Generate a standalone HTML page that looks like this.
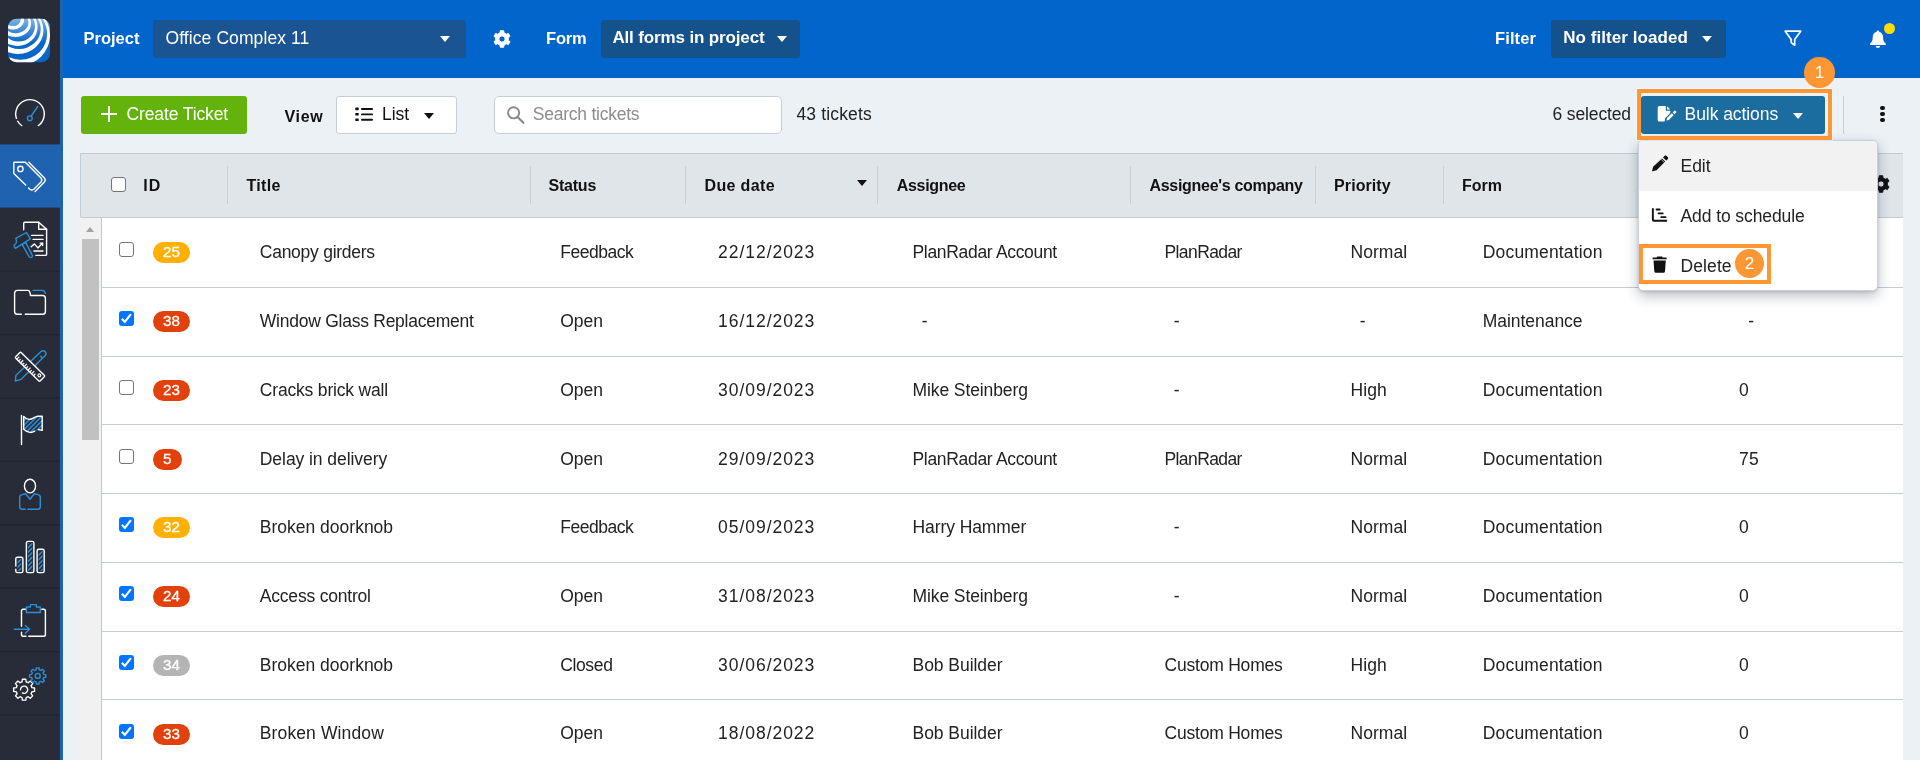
<!DOCTYPE html>
<html lang="en"><head><meta charset="utf-8"><title>Tickets</title>
<style>
*{box-sizing:border-box;margin:0;padding:0}
html,body{width:1920px;height:760px;overflow:hidden;background:#ecf1f6}
body{position:relative;font-family:"Liberation Sans",Arial,sans-serif;font-size:17px;color:#222}
#app{position:absolute;left:0;top:0;width:1920px;height:760px;overflow:hidden;will-change:transform}
.a{position:absolute}
.t{position:absolute;white-space:nowrap;line-height:20px;height:20px}
.sb{position:absolute;left:0;top:0}
.hdr{position:absolute;left:63px;top:0;width:1857px;height:78px;background:#0265cc}
.dd{position:absolute;top:20px;height:38px;border-radius:3px;background:#15528b}
.car{position:absolute;width:0;height:0;border-left:5.8px solid transparent;border-right:5.8px solid transparent;border-top:6.6px solid #fff}
.btn{position:absolute;border-radius:3px}
.box{position:absolute;background:#fff;border:1px solid #c6cfd9;border-radius:4px}
.th{position:absolute;left:80px;top:153px;width:1823px;height:65px;background:#e0e5ea;border:1px solid #bfcbd8;border-right:none;border-radius:2px 0 0 2px}
.vs{position:absolute;top:166px;width:1px;height:38px;background:#c8cfd7}
.rows{position:absolute;left:101px;top:218px;width:1802px;height:543px;background:#fff;border-left:1px solid #bccad9}
.rs{position:absolute;left:101px;width:1802px;height:1px;background:#c1cddb}
.cb{position:absolute;width:15px;height:15px;border-radius:3px;background:#fff;border:1.3px solid #767676}
.cb.on{background:#0075ff;border:none}
.bd{position:absolute;height:21px;border-radius:11px;color:#fff;font-size:15.2px;line-height:19.4px;text-align:center;-webkit-text-stroke:0.3px #fff}
.menu{position:absolute;left:1638px;top:140px;width:240px;height:151px;background:#fff;border:1px solid #c6d1dd;border-radius:5px;box-shadow:0 5px 13px rgba(30,40,55,.30),0 1px 3px rgba(30,40,55,.14);overflow:hidden}
.hl{position:absolute;border:4px solid #fd9733;box-shadow:0 0 0 1px rgba(255,255,255,.45)}
.nb{position:absolute;border-radius:50%;background:#fd9733;color:#fff;text-align:center}
</style></head>
<body>
<div id="app">
<nav>
<svg class="sb" width="63" height="760" viewBox="0 0 63 760">
<defs><linearGradient id="lg" x1="0" y1="0" x2="0" y2="1"><stop offset="0" stop-color="#7db7e8"/><stop offset="0.3" stop-color="#3c88d6"/><stop offset="0.55" stop-color="#0b68c8"/><stop offset="1" stop-color="#0765c6"/></linearGradient><clipPath id="lc"><rect x="8" y="18.8" width="42" height="43.4" rx="8.5" ry="8.5"/></clipPath><pattern id="hz" width="3.2" height="3.2" patternUnits="userSpaceOnUse" patternTransform="rotate(-45)"><rect width="3.2" height="1.5" fill="#2b8fd6"/></pattern><clipPath id="fc"><path d="M23.7 416.6 C26 419 28 419.6 30 419.3 C33.5 418.8 35 416.2 37.9 416.2 L42.2 416.2 L42.2 430.4 L38.3 429.6 L34.7 431.2 C32.5 432.4 31 432.6 30 432.4 C27.5 432 25.5 431 23.7 429.2 Z"/></clipPath></defs>
<rect x="0" y="0" width="60" height="760" fill="#272c38"/>
<rect x="60" y="0" width="3" height="760" fill="#1e62b0"/>
<rect x="0" y="144.4" width="60" height="63.2" fill="#1e62b0"/>
<rect x="0" y="270.7" width="60" height="1" fill="#1f2430"/>
<rect x="0" y="334.1" width="60" height="1" fill="#1f2430"/>
<rect x="0" y="397.5" width="60" height="1" fill="#1f2430"/>
<rect x="0" y="460.9" width="60" height="1" fill="#1f2430"/>
<rect x="0" y="524.3" width="60" height="1" fill="#1f2430"/>
<rect x="0" y="587.7" width="60" height="1" fill="#1f2430"/>
<rect x="0" y="651.1" width="60" height="1" fill="#1f2430"/>
<rect x="0" y="714.5" width="60" height="1" fill="#1f2430"/>
<g clip-path="url(#lc)"><rect x="8" y="18" width="42" height="45" fill="url(#lg)"/>
<path fill="#fff" fill-rule="evenodd" d="M1.70 19.80 A11.20 9.70 0 1 0 24.10 19.80 A11.20 9.70 0 1 0 1.70 19.80 Z M5.10 19.80 A7.80 6.30 0 1 0 20.70 19.80 A7.80 6.30 0 1 0 5.10 19.80 Z"/>
<path fill="#fff" fill-rule="evenodd" d="M-0.68 23.18 A15.90 13.80 0 1 0 31.12 23.18 A15.90 13.80 0 1 0 -0.68 23.18 Z M3.08 22.62 A12.70 10.60 0 1 0 28.48 22.62 A12.70 10.60 0 1 0 3.08 22.62 Z"/>
<path fill="#fff" fill-rule="evenodd" d="M-2.56 26.86 A20.10 19.10 0 1 0 37.64 26.86 A20.10 19.10 0 1 0 -2.56 26.86 Z M1.96 25.94 A16.50 15.50 0 1 0 34.96 25.94 A16.50 15.50 0 1 0 1.96 25.94 Z"/>
<path fill="#fff" fill-rule="evenodd" d="M-7.45 30.20 A25.45 23.85 0 1 0 43.45 30.20 A25.45 23.85 0 1 0 -7.45 30.20 Z M-2.35 29.00 A21.55 19.95 0 1 0 40.75 29.00 A21.55 19.95 0 1 0 -2.35 29.00 Z"/>
<path fill="#fff" fill-rule="evenodd" d="M-11.46 35.21 A30.75 30.35 0 1 0 50.04 35.21 A30.75 30.35 0 1 0 -11.46 35.21 Z M-5.74 33.79 A26.45 26.05 0 1 0 47.16 33.79 A26.45 26.05 0 1 0 -5.74 33.79 Z"/>
</g>
<path d="M22.21 125.99 A14.3 14.3 0 0 1 17.37 120.71" fill="none" stroke="#fff" stroke-width="1.4"/>
<path d="M16.56 118.89 A14.3 14.3 0 1 1 37.79 125.99" fill="none" stroke="#fff" stroke-width="1.4"/>
<circle cx="29.8" cy="118.3" r="2.4" fill="none" stroke="#2b8fd6" stroke-width="1.4"/>
<path d="M31.2 116.2 L37.7 106.5" stroke="#2b8fd6" stroke-width="1.4" stroke-linecap="round"/>
<g fill="none" stroke="#fff" stroke-width="1.4" stroke-linecap="round" stroke-linejoin="round"><path d="M25.7 185.1 L13.8 173.6 L13.8 162.7 Q13.8 162.2 14.3 162.2 L25.3 162.2 L41 178 Q42.6 180 41 182 L33.8 189.2 Q31.8 190.8 29.8 189.2 L28.6 188"/><circle cx="20.4" cy="168.9" r="2.7"/><path d="M28.8 162.2 L44.4 178 Q46 180 44.4 182 L35.1 191.4"/></g>
<g fill="none" stroke="#fff" stroke-width="1.4" stroke-linecap="round" stroke-linejoin="round"><path d="M23.7 229.7 L23.7 223.4 Q23.7 222.2 24.9 222.2 L38.7 222.2 L46.6 229.3 L46.6 254.2 Q46.6 255.4 45.4 255.4 L35.9 255.4"/><path d="M38.7 222.2 L38.7 229.3 L46.6 229.3"/><path d="M31.6 235.4 H43 M33.1 239.4 H43 M33.9 251 H43"/><path d="M31.2 246.7 L34.3 243.9 L37.9 247.9 L42.6 243.1 M40.2 243.1 H42.6 V245.5"/></g>
<g fill="#272c38" stroke="#2b8fd6" stroke-width="1.4" stroke-linejoin="round"><path d="M25.7 242.4 L32.4 255.6 Q32.6 257.4 30.8 257.6 Q29.4 257.6 28.8 256.2 L22.1 244.3 Z"/><path d="M26.4 232.5 L30.4 238.8 L15.4 248.3 L13.8 245.5 Q16.6 243.6 16.6 241.6 L15.8 238.4 Z"/></g>
<g fill="none" stroke-width="1.4" stroke-linecap="round" stroke-linejoin="round"><path stroke="#fff" d="M21.3 314.2 L17.4 314.2 Q14.6 314.2 14.6 311.4 L14.6 293.2 Q14.6 290.4 17.4 290.4 L27.6 290.4 Q29.4 290.4 29.8 292.2 L30.6 295.5 L42.6 295.5 Q45.4 295.5 45.4 298.3 L45.4 311.4 Q45.4 314.2 42.6 314.2 L25.3 314.2"/><path stroke="#2b8fd6" d="M33.1 290.4 L42.4 290.4 Q44.6 290.6 45.4 293.3"/></g>
<g fill="none" stroke="#2b8fd6" stroke-width="1.4" stroke-linecap="round" stroke-linejoin="round"><path d="M15.8 375.5 L41 351.6 Q43.4 349.8 45.2 351.8 Q47 353.8 45 355.8 L20.9 379.4 L15.4 381 Z"/><path d="M40.4 356.2 L42 357.4"/></g>
<g transform="translate(20.5 351.8) rotate(44.5)"><rect x="0" y="0" width="34.5" height="8" rx="1.2" fill="#272c38" stroke="#fff" stroke-width="1.4"/><path d="M2.6 8 V4.2" stroke="#fff" stroke-width="1.2"/><path d="M5.2 8 V5.2" stroke="#fff" stroke-width="1.2"/><path d="M7.8 8 V4.2" stroke="#fff" stroke-width="1.2"/><path d="M10.4 8 V5.2" stroke="#fff" stroke-width="1.2"/><path d="M13.0 8 V4.2" stroke="#fff" stroke-width="1.2"/><path d="M15.6 8 V5.2" stroke="#fff" stroke-width="1.2"/><path d="M18.2 8 V4.2" stroke="#fff" stroke-width="1.2"/><path d="M20.8 8 V5.2" stroke="#fff" stroke-width="1.2"/><path d="M23.4 8 V4.2" stroke="#fff" stroke-width="1.2"/><path d="M26.0 8 V5.2" stroke="#fff" stroke-width="1.2"/><circle cx="30" cy="3.6" r="1.4" fill="none" stroke="#fff" stroke-width="1.2"/></g>
<rect x="23.7" y="416" width="18.5" height="17" fill="url(#hz)" clip-path="url(#fc)"/>
<g fill="none" stroke="#fff" stroke-width="1.4" stroke-linecap="round" stroke-linejoin="round"><path d="M21.5 415.4 V444.6"/><path d="M38.3 429.6 L42.2 430.4 L42.2 416.2 L37.9 416.2 C35 416.2 33.5 418.8 30 419.3 C28 419.6 26 419 23.7 416.6 L23.7 429.2 C25.5 431 27.5 432 30 432.4 C31 432.6 32.5 432.4 34.7 431.2"/></g>
<ellipse cx="30" cy="486.1" rx="5.6" ry="6.8" fill="none" stroke="#fff" stroke-width="1.4"/>
<path fill="none" stroke="#2b8fd6" stroke-width="1.4" stroke-linecap="round" stroke-linejoin="round" d="M28 509.2 L37.9 509.2 Q40.3 509.2 40.3 506.8 L40.3 497.3 Q40.3 495 37.9 494.6 L34.3 493.8 L30 499.3 L25.7 493.8 L22.1 494.6 Q19.7 495 19.7 497.3 L19.7 506.8 Q19.7 509.2 22.1 509.2 L25.3 509.2"/>
<rect x="17.4" y="558.8" width="3.9" height="12.2" fill="url(#hz)"/>
<rect x="28.0" y="543.0" width="4.3" height="28.0" fill="url(#hz)"/>
<rect x="38.7" y="550.9" width="3.9" height="20.1" fill="url(#hz)"/>
<g fill="none" stroke="#fff" stroke-width="1.4" stroke-linecap="round"><path d="M15.8 566 V558.8 Q15.8 557.2 17.4 557.2 H21.3 Q22.9 557.2 22.9 558.8 V571 Q22.9 572.6 21.3 572.6 H17.4 Q15.8 572.6 15.8 571 V569.2"/><rect x="26.4" y="541.4" width="7.5" height="31.2" rx="1.7"/><rect x="37.1" y="549.3" width="7.1" height="23.3" rx="1.7"/></g>
<g fill="none" stroke-width="1.4" stroke-linecap="round" stroke-linejoin="round"><path stroke="#fff" d="M25.7 609.3 H23.3 Q21.5 609.3 21.5 611.1 V626.3 M21.5 632.2 V634.4 Q21.5 636.2 23.3 636.2 H26 M28.8 636.2 H43.6 Q45.4 636.2 45.4 634.4 V611.1 Q45.4 609.3 43.6 609.3 H41.8"/><path stroke="#2b8fd6" d="M26.4 612.5 V607 H30.4 V604.6 H36.3 V607 H40.3 V612.5 Z"/><path stroke="#2b8fd6" d="M14.2 629.3 H29.4 M25.3 625.5 L29.6 629.3 L25.3 633.3"/></g>
<path d="M22.02 681.87 L22.36 679.24 L25.84 679.24 L26.18 681.87 L28.17 682.70 L30.26 681.08 L32.72 683.54 L31.10 685.63 L31.93 687.62 L34.56 687.96 L34.56 691.44 L31.93 691.78 L31.10 693.77 L32.72 695.86 L30.26 698.32 L28.17 696.70 L26.18 697.53 L25.84 700.16 L22.36 700.16 L22.02 697.53 L20.03 696.70 L17.94 698.32 L15.48 695.86 L17.10 693.77 L16.27 691.78 L13.64 691.44 L13.64 687.96 L16.27 687.62 L17.10 685.63 L15.48 683.54 L17.94 681.08 L20.03 682.70 Z" fill="none" stroke="#fff" stroke-width="1.35" stroke-linejoin="round"/>
<path d="M20.50 689.90 A3.6 3.6 0 1 1 22.40 692.90" fill="none" stroke="#fff" stroke-width="1.35" stroke-linecap="round"/>
<path d="M36.11 669.91 L36.35 667.81 L39.05 667.81 L39.29 669.91 L40.81 670.54 L42.47 669.23 L44.37 671.13 L43.06 672.79 L43.69 674.31 L45.79 674.55 L45.79 677.25 L43.69 677.49 L43.06 679.01 L44.37 680.67 L42.47 682.57 L40.81 681.26 L39.29 681.89 L39.05 683.99 L36.35 683.99 L36.11 681.89 L34.59 681.26 L32.93 682.57 L31.03 680.67 L32.34 679.01 L31.71 677.49 L29.61 677.25 L29.61 674.55 L31.71 674.31 L32.34 672.79 L31.03 671.13 L32.93 669.23 L34.59 670.54 Z" fill="none" stroke="#2b8fd6" stroke-width="1.35" stroke-linejoin="round"/>
<circle cx="37.7" cy="675.9" r="2.5" fill="none" stroke="#2b8fd6" stroke-width="1.35"/>
</svg>
</nav>
<header>
<div class="hdr"></div>
<span class="t " style="left:83.6px;top:28px;font-size:16.5px;letter-spacing:-0.02px;color:#fff;font-weight:700;">Project</span>
<div class="dd" style="left:153px;width:313px;background:#1a5492"></div>
<span class="t " style="left:165.5px;top:28px;font-size:17.5px;letter-spacing:0.09px;color:#fff;">Office Complex 11</span>
<div class="car" style="left:439.8px;top:35.8px"></div>
<svg class="a" style="left:491px;top:28px" width="22" height="22" viewBox="-11 -11 22 22"><path fill="#fff" stroke="#fff" stroke-width="0.9" stroke-linejoin="round" fill-rule="evenodd" d="M-2.01 -6.18 L-1.68 -8.33 L1.68 -8.33 L2.01 -6.18 L4.35 -4.83 L6.38 -5.62 L8.06 -2.71 L6.36 -1.35 L6.36 1.35 L8.06 2.71 L6.38 5.62 L4.35 4.83 L2.01 6.18 L1.68 8.33 L-1.68 8.33 L-2.01 6.18 L-4.35 4.83 L-6.38 5.62 L-8.06 2.71 L-6.36 1.35 L-6.36 -1.35 L-8.06 -2.71 L-6.38 -5.62 L-4.35 -4.83 Z M3.1 0 A3.1 3.1 0 1 0 -3.1 0 A3.1 3.1 0 1 0 3.1 0 Z"/></svg>
<span class="t " style="left:546.1px;top:28px;font-size:16.5px;letter-spacing:-0.22px;color:#fff;font-weight:700;">Form</span>
<div class="dd" style="left:601.3px;width:198.7px"></div>
<span class="t " style="left:612.4px;top:28px;font-size:17px;letter-spacing:-0.14px;color:#fff;font-weight:700;">All forms in project</span>
<div class="car" style="left:776.8px;top:36.4px"></div>
<span class="t " style="left:1495.0px;top:28px;font-size:16.5px;letter-spacing:0.11px;color:#fff;font-weight:700;">Filter</span>
<div class="dd" style="left:1551.3px;width:174.5px"></div>
<span class="t " style="left:1563.3px;top:28px;font-size:17px;letter-spacing:0.05px;color:#fff;font-weight:700;">No filter loaded</span>
<div class="car" style="left:1702.4px;top:36.4px"></div>
<svg class="a" style="left:1780px;top:26px" width="26" height="24" viewBox="1780 26 26 24"><path d="M1785.2 31.2 H1800.7 L1794.7 39.4 V45.2 L1791.2 42.6 V39.4 Z" fill="none" stroke="#fff" stroke-width="1.7" stroke-linejoin="round"/></svg>
<svg class="a" style="left:1866px;top:28px" width="24" height="22" viewBox="1866 28 24 22"><path fill="#fff" d="M1877.9 30.6 c0.8 0 1.2 0.5 1.2 1.2 c2.6 0.6 4 2.7 4 5.4 c0 3.4 0.9 4.9 2.6 6.4 c0.4 0.4 0.3 1.4 -0.6 1.4 h-14.4 c-0.9 0 -1 -1 -0.6 -1.4 c1.7 -1.5 2.6 -3 2.6 -6.4 c0 -2.7 1.4 -4.8 4 -5.4 c0 -0.7 0.4 -1.2 1.2 -1.2 z M1875.8 46.1 h4.2 c0 1.2 -0.9 2 -2.1 2 s-2.1 -0.8 -2.1 -2 z"/></svg>
<div class="a" style="left:1883.8px;top:22.7px;width:11.4px;height:11.4px;border-radius:50%;background:#ffdc0a"></div>
</header>
<main>
<section>
<div class="btn" style="left:81px;top:96px;width:166px;height:38px;background:#64b30c"></div>
<div class="a" style="left:101px;top:113.1px;width:16px;height:1.9px;background:#fff"></div><div class="a" style="left:108.1px;top:106px;width:1.9px;height:16px;background:#fff"></div>
<span class="t " style="left:126.5px;top:104px;font-size:17.5px;letter-spacing:-0.12px;color:#fff;">Create Ticket</span>
<span class="t " style="left:284.5px;top:107px;font-size:16px;letter-spacing:0.68px;color:#111;font-weight:700;">View</span>
<div class="box" style="left:336px;top:96px;width:120.6px;height:37.6px;border-radius:3px"></div>
<svg class="a" style="left:355px;top:106px" width="20" height="16" viewBox="355 106 20 16"><g fill="#111"><rect x="355.3" y="107.6" width="3.4" height="2.6" rx="0.6"/><rect x="355.3" y="113" width="3.4" height="2.6" rx="0.6"/><rect x="355.3" y="118.4" width="3.4" height="2.6" rx="0.6"/><rect x="361" y="108" width="12" height="1.9" rx="0.9"/><rect x="361" y="113.4" width="12" height="1.9" rx="0.9"/><rect x="361" y="118.8" width="12" height="1.9" rx="0.9"/></g></svg>
<span class="t " style="left:382.0px;top:104px;font-size:17.5px;letter-spacing:-0.05px;color:#111;">List</span>
<div class="car" style="left:424px;top:112.6px;border-top-color:#111"></div>
<div class="box" style="left:494px;top:96px;width:288px;height:37.5px;border-radius:5px"></div>
<svg class="a" style="left:505px;top:104px" width="22" height="22" viewBox="505 104 22 22"><circle cx="513.6" cy="112.8" r="5.6" fill="none" stroke="#8a8a8a" stroke-width="1.9"/><path d="M517.8 117.2 L523.4 122.8" stroke="#8a8a8a" stroke-width="2.2" stroke-linecap="round"/></svg>
<span class="t " style="left:532.8px;top:104px;font-size:17.5px;letter-spacing:-0.24px;color:#8d8d8d;">Search tickets</span>
<span class="t " style="left:796.5px;top:104px;font-size:17.5px;letter-spacing:0.14px;color:#222;">43 tickets</span>
<span class="t " style="left:1552.5px;top:104px;font-size:17.5px;letter-spacing:-0.13px;color:#222;">6 selected</span>
<div class="btn" style="left:1641px;top:96px;width:184px;height:37.8px;background:#1b6c9f"></div>
<svg class="a" style="left:1656px;top:104px" width="22" height="20" viewBox="1656 104 22 20"><path fill="#fff" d="M1659.2 106 h6.6 l0 4.2 q0 0.6 0.6 0.6 h3.9 v2.2 l-5.2 5.2 l-0.5 3.4 h-5.4 q-1.5 0 -1.5 -1.5 v-12.6 q0 -1.5 1.5 -1.5 z M1667 106.2 l3.3 3.4 h-3.3 z"/><path fill="#fff" d="M1672.6 112.4 l1.7 -1.7 q0.5 -0.4 1 0 l0.9 0.9 q0.4 0.5 0 1 l-1.7 1.7 z M1671.8 113.2 l1.9 1.9 l-4.8 4.8 l-2.5 0.6 l0.6 -2.5 z"/></svg>
<span class="t " style="left:1684.6px;top:104px;font-size:17.5px;letter-spacing:-0.07px;color:#fff;">Bulk actions</span>
<div class="car" style="left:1793px;top:112.9px"></div>
<div class="a" style="left:1843px;top:96px;width:1px;height:38px;background:#c6ced7"></div>
<div class="a" style="left:1880.4px;top:105.5px;width:4.6px;height:4.6px;border-radius:50%;background:#111"></div>
<div class="a" style="left:1880.4px;top:111.7px;width:4.6px;height:4.6px;border-radius:50%;background:#111"></div>
<div class="a" style="left:1880.4px;top:117.9px;width:4.6px;height:4.6px;border-radius:50%;background:#111"></div>
</section>
<section>
<div class="rows"></div>
<div class="a" style="left:80px;top:218px;width:21px;height:542px;background:#f1f1f1"></div>
<div class="a" style="left:82px;top:239px;width:17px;height:201px;background:#c1c1c1"></div>
<div class="a" style="left:85.9px;top:226.8px;width:0;height:0;border-left:4.6px solid transparent;border-right:4.6px solid transparent;border-bottom:5px solid #a3a3a3"></div>
<div class="th"></div>
<div class="vs" style="left:227.2px"></div>
<div class="vs" style="left:530.2px"></div>
<div class="vs" style="left:685.2px"></div>
<div class="vs" style="left:877.2px"></div>
<div class="vs" style="left:1130.2px"></div>
<div class="vs" style="left:1315.2px"></div>
<div class="vs" style="left:1443.2px"></div>
<div class="cb" style="left:110.5px;top:177px"></div>
<span class="t " style="left:143.3px;top:176px;font-size:16px;letter-spacing:1.10px;color:#111;font-weight:700;">ID</span>
<span class="t " style="left:246.5px;top:176px;font-size:16px;letter-spacing:0.30px;color:#111;font-weight:700;">Title</span>
<span class="t " style="left:548.5px;top:176px;font-size:16px;letter-spacing:-0.22px;color:#111;font-weight:700;">Status</span>
<span class="t " style="left:704.5px;top:176px;font-size:16px;letter-spacing:0.36px;color:#111;font-weight:700;">Due date</span>
<span class="t " style="left:896.8px;top:176px;font-size:16px;letter-spacing:-0.33px;color:#111;font-weight:700;">Assignee</span>
<span class="t " style="left:1149.5px;top:176px;font-size:16px;letter-spacing:-0.30px;color:#111;font-weight:700;">Assignee's company</span>
<span class="t " style="left:1334.1px;top:176px;font-size:16px;letter-spacing:0.08px;color:#111;font-weight:700;">Priority</span>
<span class="t " style="left:1462.1px;top:176px;font-size:16px;letter-spacing:-0.05px;color:#111;font-weight:700;">Form</span>
<div class="car" style="left:856.6px;top:180.2px;border-top-color:#111;border-left-width:5.6px;border-right-width:5.6px;border-top-width:6.4px"></div>
<svg class="a" style="left:1869.7px;top:173px" width="22" height="22" viewBox="-11 -11 22 22"><path fill="#111" stroke="#111" stroke-width="0.9" stroke-linejoin="round" fill-rule="evenodd" d="M-2.01 -6.18 L-1.68 -8.33 L1.68 -8.33 L2.01 -6.18 L4.35 -4.83 L6.38 -5.62 L8.06 -2.71 L6.36 -1.35 L6.36 1.35 L8.06 2.71 L6.38 5.62 L4.35 4.83 L2.01 6.18 L1.68 8.33 L-1.68 8.33 L-2.01 6.18 L-4.35 4.83 L-6.38 5.62 L-8.06 2.71 L-6.36 1.35 L-6.36 -1.35 L-8.06 -2.71 L-6.38 -5.62 L-4.35 -4.83 Z M3.1 0 A3.1 3.1 0 1 0 -3.1 0 A3.1 3.1 0 1 0 3.1 0 Z"/></svg>
<div class="cb" style="left:119px;top:242.3px"></div>
<div class="bd" style="left:152.8px;top:242.3px;width:37.2px;background:#ffb002">25</div>
<span class="t " style="left:259.8px;top:242px;font-size:17.5px;letter-spacing:-0.26px;color:#222;">Canopy girders</span>
<span class="t " style="left:560.2px;top:242px;font-size:17.5px;letter-spacing:-0.46px;color:#222;">Feedback</span>
<span class="t " style="left:718.1px;top:242px;font-size:17.5px;letter-spacing:0.95px;color:#222;">22/12/2023</span>
<span class="t " style="left:912.5px;top:242px;font-size:17.5px;letter-spacing:-0.32px;color:#222;">PlanRadar Account</span>
<span class="t " style="left:1164.5px;top:242px;font-size:17.5px;letter-spacing:-0.60px;color:#222;">PlanRadar</span>
<span class="t " style="left:1350.5px;top:242px;font-size:17.5px;letter-spacing:0.03px;color:#222;">Normal</span>
<span class="t " style="left:1482.8px;top:242px;font-size:17.5px;letter-spacing:0.16px;color:#222;">Documentation</span>
<div class="rs" style="top:287px"></div>
<div class="cb on" style="left:119px;top:311.1px"><svg width="15" height="15" viewBox="0 0 15 15" style="display:block"><path d="M2.9 7.7 L5.9 10.9 L11.9 3.1" fill="none" stroke="#fff" stroke-width="2.2" stroke-linecap="butt" stroke-linejoin="miter"/></svg></div>
<div class="bd" style="left:152.8px;top:311.1px;width:37.2px;background:#e2410c">38</div>
<span class="t " style="left:259.8px;top:311px;font-size:17.5px;letter-spacing:-0.25px;color:#222;">Window Glass Replacement</span>
<span class="t " style="left:560.2px;top:311px;font-size:17.5px;letter-spacing:-0.04px;color:#222;">Open</span>
<span class="t " style="left:718.1px;top:311px;font-size:17.5px;letter-spacing:0.95px;color:#222;">16/12/2023</span>
<span class="t " style="left:921.8px;top:311px;font-size:17.5px;letter-spacing:0.67px;color:#222;">-</span>
<span class="t " style="left:1173.8px;top:311px;font-size:17.5px;letter-spacing:0.67px;color:#222;">-</span>
<span class="t " style="left:1359.8px;top:311px;font-size:17.5px;letter-spacing:0.67px;color:#222;">-</span>
<span class="t " style="left:1482.8px;top:311px;font-size:17.5px;letter-spacing:-0.05px;color:#222;">Maintenance</span>
<span class="t " style="left:1748.2px;top:311px;font-size:17.5px;letter-spacing:0.67px;color:#222;">-</span>
<div class="rs" style="top:356px"></div>
<div class="cb" style="left:119px;top:379.8px"></div>
<div class="bd" style="left:152.8px;top:379.8px;width:37.2px;background:#e2410c">23</div>
<span class="t " style="left:259.8px;top:380px;font-size:17.5px;letter-spacing:-0.18px;color:#222;">Cracks brick wall</span>
<span class="t " style="left:560.2px;top:380px;font-size:17.5px;letter-spacing:-0.04px;color:#222;">Open</span>
<span class="t " style="left:718.1px;top:380px;font-size:17.5px;letter-spacing:0.95px;color:#222;">30/09/2023</span>
<span class="t " style="left:912.5px;top:380px;font-size:17.5px;letter-spacing:-0.10px;color:#222;">Mike Steinberg</span>
<span class="t " style="left:1173.8px;top:380px;font-size:17.5px;letter-spacing:0.67px;color:#222;">-</span>
<span class="t " style="left:1350.5px;top:380px;font-size:17.5px;letter-spacing:0.07px;color:#222;">High</span>
<span class="t " style="left:1482.8px;top:380px;font-size:17.5px;letter-spacing:0.16px;color:#222;">Documentation</span>
<span class="t " style="left:1738.9px;top:380px;font-size:17.5px;letter-spacing:0.42px;color:#222;">0</span>
<div class="rs" style="top:424px"></div>
<div class="cb" style="left:119px;top:448.6px"></div>
<div class="bd" style="left:152.8px;top:448.6px;width:29.0px;background:#e2410c">5</div>
<span class="t " style="left:259.8px;top:449px;font-size:17.5px;letter-spacing:-0.06px;color:#222;">Delay in delivery</span>
<span class="t " style="left:560.2px;top:449px;font-size:17.5px;letter-spacing:-0.04px;color:#222;">Open</span>
<span class="t " style="left:718.1px;top:449px;font-size:17.5px;letter-spacing:0.95px;color:#222;">29/09/2023</span>
<span class="t " style="left:912.5px;top:449px;font-size:17.5px;letter-spacing:-0.32px;color:#222;">PlanRadar Account</span>
<span class="t " style="left:1164.5px;top:449px;font-size:17.5px;letter-spacing:-0.60px;color:#222;">PlanRadar</span>
<span class="t " style="left:1350.5px;top:449px;font-size:17.5px;letter-spacing:0.03px;color:#222;">Normal</span>
<span class="t " style="left:1482.8px;top:449px;font-size:17.5px;letter-spacing:0.16px;color:#222;">Documentation</span>
<span class="t " style="left:1738.9px;top:449px;font-size:17.5px;letter-spacing:0.42px;color:#222;">75</span>
<div class="rs" style="top:493px"></div>
<div class="cb on" style="left:119px;top:517.3px"><svg width="15" height="15" viewBox="0 0 15 15" style="display:block"><path d="M2.9 7.7 L5.9 10.9 L11.9 3.1" fill="none" stroke="#fff" stroke-width="2.2" stroke-linecap="butt" stroke-linejoin="miter"/></svg></div>
<div class="bd" style="left:152.8px;top:517.3px;width:37.2px;background:#ffb002">32</div>
<span class="t " style="left:259.8px;top:517px;font-size:17.5px;letter-spacing:0.00px;color:#222;">Broken doorknob</span>
<span class="t " style="left:560.2px;top:517px;font-size:17.5px;letter-spacing:-0.46px;color:#222;">Feedback</span>
<span class="t " style="left:718.1px;top:517px;font-size:17.5px;letter-spacing:0.95px;color:#222;">05/09/2023</span>
<span class="t " style="left:912.5px;top:517px;font-size:17.5px;letter-spacing:-0.08px;color:#222;">Harry Hammer</span>
<span class="t " style="left:1173.8px;top:517px;font-size:17.5px;letter-spacing:0.67px;color:#222;">-</span>
<span class="t " style="left:1350.5px;top:517px;font-size:17.5px;letter-spacing:0.03px;color:#222;">Normal</span>
<span class="t " style="left:1482.8px;top:517px;font-size:17.5px;letter-spacing:0.16px;color:#222;">Documentation</span>
<span class="t " style="left:1738.9px;top:517px;font-size:17.5px;letter-spacing:0.42px;color:#222;">0</span>
<div class="rs" style="top:562px"></div>
<div class="cb on" style="left:119px;top:586.0px"><svg width="15" height="15" viewBox="0 0 15 15" style="display:block"><path d="M2.9 7.7 L5.9 10.9 L11.9 3.1" fill="none" stroke="#fff" stroke-width="2.2" stroke-linecap="butt" stroke-linejoin="miter"/></svg></div>
<div class="bd" style="left:152.8px;top:586.0px;width:37.2px;background:#e2410c">24</div>
<span class="t " style="left:259.8px;top:586px;font-size:17.5px;letter-spacing:-0.20px;color:#222;">Access control</span>
<span class="t " style="left:560.2px;top:586px;font-size:17.5px;letter-spacing:-0.04px;color:#222;">Open</span>
<span class="t " style="left:718.1px;top:586px;font-size:17.5px;letter-spacing:0.95px;color:#222;">31/08/2023</span>
<span class="t " style="left:912.5px;top:586px;font-size:17.5px;letter-spacing:-0.10px;color:#222;">Mike Steinberg</span>
<span class="t " style="left:1173.8px;top:586px;font-size:17.5px;letter-spacing:0.67px;color:#222;">-</span>
<span class="t " style="left:1350.5px;top:586px;font-size:17.5px;letter-spacing:0.03px;color:#222;">Normal</span>
<span class="t " style="left:1482.8px;top:586px;font-size:17.5px;letter-spacing:0.16px;color:#222;">Documentation</span>
<span class="t " style="left:1738.9px;top:586px;font-size:17.5px;letter-spacing:0.42px;color:#222;">0</span>
<div class="rs" style="top:631px"></div>
<div class="cb on" style="left:119px;top:654.8px"><svg width="15" height="15" viewBox="0 0 15 15" style="display:block"><path d="M2.9 7.7 L5.9 10.9 L11.9 3.1" fill="none" stroke="#fff" stroke-width="2.2" stroke-linecap="butt" stroke-linejoin="miter"/></svg></div>
<div class="bd" style="left:152.8px;top:654.8px;width:37.2px;background:#b4b4b4">34</div>
<span class="t " style="left:259.8px;top:655px;font-size:17.5px;letter-spacing:0.00px;color:#222;">Broken doorknob</span>
<span class="t " style="left:560.2px;top:655px;font-size:17.5px;letter-spacing:-0.36px;color:#222;">Closed</span>
<span class="t " style="left:718.1px;top:655px;font-size:17.5px;letter-spacing:0.95px;color:#222;">30/06/2023</span>
<span class="t " style="left:912.5px;top:655px;font-size:17.5px;letter-spacing:-0.04px;color:#222;">Bob Builder</span>
<span class="t " style="left:1164.5px;top:655px;font-size:17.5px;letter-spacing:-0.21px;color:#222;">Custom Homes</span>
<span class="t " style="left:1350.5px;top:655px;font-size:17.5px;letter-spacing:0.07px;color:#222;">High</span>
<span class="t " style="left:1482.8px;top:655px;font-size:17.5px;letter-spacing:0.16px;color:#222;">Documentation</span>
<span class="t " style="left:1738.9px;top:655px;font-size:17.5px;letter-spacing:0.42px;color:#222;">0</span>
<div class="rs" style="top:699px"></div>
<div class="cb on" style="left:119px;top:723.5px"><svg width="15" height="15" viewBox="0 0 15 15" style="display:block"><path d="M2.9 7.7 L5.9 10.9 L11.9 3.1" fill="none" stroke="#fff" stroke-width="2.2" stroke-linecap="butt" stroke-linejoin="miter"/></svg></div>
<div class="bd" style="left:152.8px;top:723.5px;width:37.2px;background:#e2410c">33</div>
<span class="t " style="left:259.8px;top:723px;font-size:17.5px;letter-spacing:0.12px;color:#222;">Broken Window</span>
<span class="t " style="left:560.2px;top:723px;font-size:17.5px;letter-spacing:-0.04px;color:#222;">Open</span>
<span class="t " style="left:718.1px;top:723px;font-size:17.5px;letter-spacing:0.95px;color:#222;">18/08/2022</span>
<span class="t " style="left:912.5px;top:723px;font-size:17.5px;letter-spacing:-0.04px;color:#222;">Bob Builder</span>
<span class="t " style="left:1164.5px;top:723px;font-size:17.5px;letter-spacing:-0.21px;color:#222;">Custom Homes</span>
<span class="t " style="left:1350.5px;top:723px;font-size:17.5px;letter-spacing:0.03px;color:#222;">Normal</span>
<span class="t " style="left:1482.8px;top:723px;font-size:17.5px;letter-spacing:0.16px;color:#222;">Documentation</span>
<span class="t " style="left:1738.9px;top:723px;font-size:17.5px;letter-spacing:0.42px;color:#222;">0</span>
</section>
<aside>
<div class="menu"><div class="a" style="left:0;top:0;width:240px;height:50px;background:#f2f2f2"></div></div>
<svg class="a" style="left:1650px;top:154px" width="20" height="20" viewBox="1650 154 20 20"><path fill="#111" d="M1663.0 157.4 l1.7 -1.7 q0.8 -0.7 1.6 0 l1.6 1.6 q0.7 0.8 0 1.6 l-1.7 1.7 z M1662.0 158.4 l3.2 3.2 l-8.6 8.6 l-4 1 q-0.6 0.1 -0.5 -0.5 l1 -4 z"/><path d="M1661.2 159.4 l3.2 3.2" stroke="#f2f2f2" stroke-width="0.7"/></svg>
<span class="t " style="left:1680.5px;top:156px;font-size:17.5px;letter-spacing:-0.04px;color:#222;">Edit</span>
<svg class="a" style="left:1650px;top:206px" width="20" height="18" viewBox="1650 206 20 18"><g fill="#111"><path d="M1651.9 208.3 h1.9 v10.6 q0 0.9 0.9 0.9 h12.4 v1.9 h-13.3 q-1.9 0 -1.9 -1.9 z"/><rect x="1655.6" y="208.6" width="5" height="1.9" rx="0.9"/><rect x="1657.6" y="212.4" width="6" height="1.9" rx="0.9"/><rect x="1660.4" y="216.2" width="6" height="1.9" rx="0.9"/></g></svg>
<span class="t " style="left:1680.5px;top:206px;font-size:17.5px;letter-spacing:-0.09px;color:#222;">Add to schedule</span>
<svg class="a" style="left:1650px;top:254px" width="20" height="20" viewBox="1650 254 20 20"><path fill="#111" d="M1657.2 256.4 h4.9 l0.6 1.2 h3.4 q0.6 0 0.6 0.6 v1 h-14.1 v-1 q0 -0.6 0.6 -0.6 h3.4 z M1653.5 260.4 h12.3 l-0.8 10.8 q-0.1 1.5 -1.6 1.5 h-7.5 q-1.5 0 -1.6 -1.5 z"/></svg>
<span class="t " style="left:1680.5px;top:256px;font-size:17.5px;letter-spacing:0.10px;color:#222;">Delete</span>
<div class="hl" style="left:1637px;top:89px;width:195px;height:51px"></div>
<div class="nb" style="left:1804.2px;top:57.1px;width:30.6px;height:30.6px;font-size:17px;line-height:32px">1</div>
<div class="hl" style="left:1639px;top:244px;width:132px;height:40px;box-shadow:none"></div>
<div class="nb" style="left:1734.8px;top:248.9px;width:29.5px;height:29.5px;font-size:17px;line-height:30.5px">2</div>
</aside>
</main>
</div>
</body></html>
